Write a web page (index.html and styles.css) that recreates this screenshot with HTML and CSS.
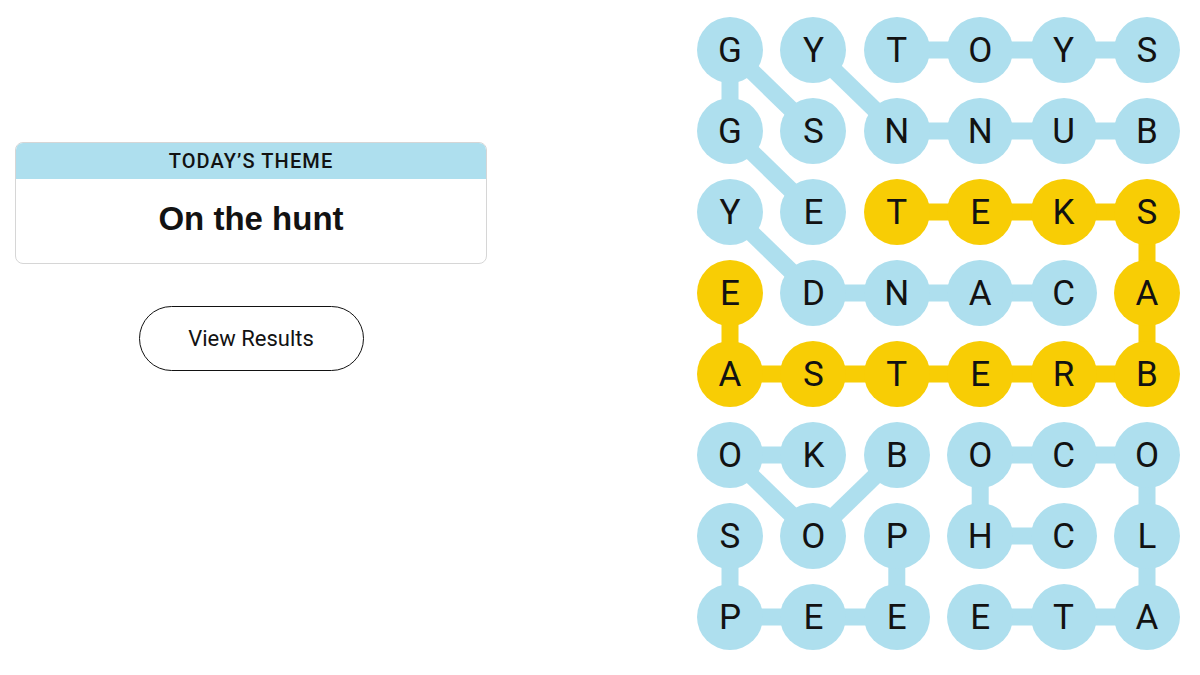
FILE: index.html
```html
<!DOCTYPE html>
<html lang="en">
	<head>
		<meta charset="utf-8">
		<title>Strands</title>

		<link rel="stylesheet" href="styles.css">
	</head>

	<body>
		<main class="game">
			<section class="sidebar">
				<div class="theme">
					<h2 class="theme-label">Today’s Theme</h2>
					<p class="theme-clue">On the hunt</p>
				</div>
				<button class="results">View Results</button>
			</section>

			<section class="board">
				<!-- Connectors sit behind the letter circles -->
				<svg class="links" viewBox="0 0 483 633" aria-hidden="true">
					<g stroke="#aedfee" stroke-width="17" stroke-linecap="butt">
						<line x1="33" y1="33" x2="33" y2="114"/>
						<line x1="33" y1="33" x2="116.4" y2="114"/>
						<line x1="33" y1="114" x2="116.4" y2="195"/>
						<line x1="116.4" y1="33" x2="199.8" y2="114"/>
						<line x1="199.8" y1="33" x2="450" y2="33"/>
						<line x1="199.8" y1="114" x2="450" y2="114"/>
						<line x1="33" y1="195" x2="116.4" y2="276"/>
						<line x1="116.4" y1="276" x2="366.6" y2="276"/>
						<line x1="33" y1="438" x2="116.4" y2="438"/>
						<line x1="33" y1="438" x2="116.4" y2="519"/>
						<line x1="116.4" y1="519" x2="199.8" y2="438"/>
						<line x1="33" y1="519" x2="33" y2="600"/>
						<line x1="33" y1="600" x2="199.8" y2="600"/>
						<line x1="199.8" y1="519" x2="199.8" y2="600"/>
						<line x1="283.2" y1="438" x2="450" y2="438"/>
						<line x1="283.2" y1="438" x2="283.2" y2="519"/>
						<line x1="283.2" y1="519" x2="366.6" y2="519"/>
						<line x1="450" y1="438" x2="450" y2="600"/>
						<line x1="283.2" y1="600" x2="450" y2="600"/>
					</g>
					<g stroke="#f8cd05" stroke-width="17">
						<line x1="199.8" y1="195" x2="450" y2="195"/>
						<line x1="450" y1="195" x2="450" y2="357"/>
						<line x1="33" y1="357" x2="450" y2="357"/>
						<line x1="33" y1="276" x2="33" y2="357"/>
					</g>
				</svg>

				<div class="letters">
					<span class="cell">G</span><span class="cell">Y</span><span class="cell">T</span><span class="cell">O</span><span class="cell">Y</span><span class="cell">S</span>
					<span class="cell">G</span><span class="cell">S</span><span class="cell">N</span><span class="cell">N</span><span class="cell">U</span><span class="cell">B</span>
					<span class="cell">Y</span><span class="cell">E</span><span class="cell cell--span">T</span><span class="cell cell--span">E</span><span class="cell cell--span">K</span><span class="cell cell--span">S</span>
					<span class="cell cell--span">E</span><span class="cell">D</span><span class="cell">N</span><span class="cell">A</span><span class="cell">C</span><span class="cell cell--span">A</span>
					<span class="cell cell--span">A</span><span class="cell cell--span">S</span><span class="cell cell--span">T</span><span class="cell cell--span">E</span><span class="cell cell--span">R</span><span class="cell cell--span">B</span>
					<span class="cell">O</span><span class="cell">K</span><span class="cell">B</span><span class="cell">O</span><span class="cell">C</span><span class="cell">O</span>
					<span class="cell">S</span><span class="cell">O</span><span class="cell">P</span><span class="cell">H</span><span class="cell">C</span><span class="cell">L</span>
					<span class="cell">P</span><span class="cell">E</span><span class="cell">E</span><span class="cell">E</span><span class="cell">T</span><span class="cell">A</span>
				</div>
			</section>
		</main>
	</body>
</html>
```

FILE: styles.css
```css
/* Base */
* {
	padding: 0;
	margin: 0;
	box-sizing: border-box;
}

body {
	font-family: 'Liberation Sans', Arial, sans-serif;
	color: #121212;
	background: #fff;
}

.game {
	display: flex;
	justify-content: space-between;
	width: 1200px;
	height: 675px;
	padding: 17px 20px 0 15px;
}

/* Left column: theme card and results button */
.sidebar {
	display: flex;
	flex-direction: column;
	align-items: center;
	width: 472px;
	padding-top: 125px;
}

.theme {
	width: 100%;
	border: 1px solid #d6d6d6;
	border-radius: 8px;
	overflow: hidden;
	text-align: center;
}

.theme-label {
	height: 36px;
	line-height: 37px;
	background: #aedfee;
	font-family: Roboto, 'Liberation Sans', sans-serif;
	font-size: 20px;
	font-weight: 500;
	letter-spacing: 1.1px;
	text-transform: uppercase;
}

.theme-clue {
	height: 84px;
	line-height: 80px;
	font-size: 33px;
	font-weight: bold;
}

.results {
	margin-top: 42px;
	width: 225px;
	height: 65px;
	border: 1.5px solid #121212;
	border-radius: 33px;
	background: #fff;
	color: #121212;
	font-family: Roboto, 'Liberation Sans', sans-serif;
	font-size: 22px;
}

/* Board */
.board {
	position: relative;
	width: 483px;
	height: 633px;
}

/* Connector lines between letters */
.links {
	position: absolute;
	top: 0;
	left: 0;
	width: 483px;
	height: 633px;
}

.letters {
	position: relative;
	display: grid;
	grid-template-columns: repeat(6, 66px);
	grid-auto-rows: 66px;
	column-gap: 17.4px;
	row-gap: 15px;
}

.cell {
	display: flex;
	align-items: center;
	justify-content: center;
	border-radius: 50%;
	background: #aedfee;
	font-family: Roboto, 'Liberation Sans', sans-serif;
	font-size: 35px;
	padding-top: 1px;
}

.cell--span {
	background: #f8cd05;
}
```
